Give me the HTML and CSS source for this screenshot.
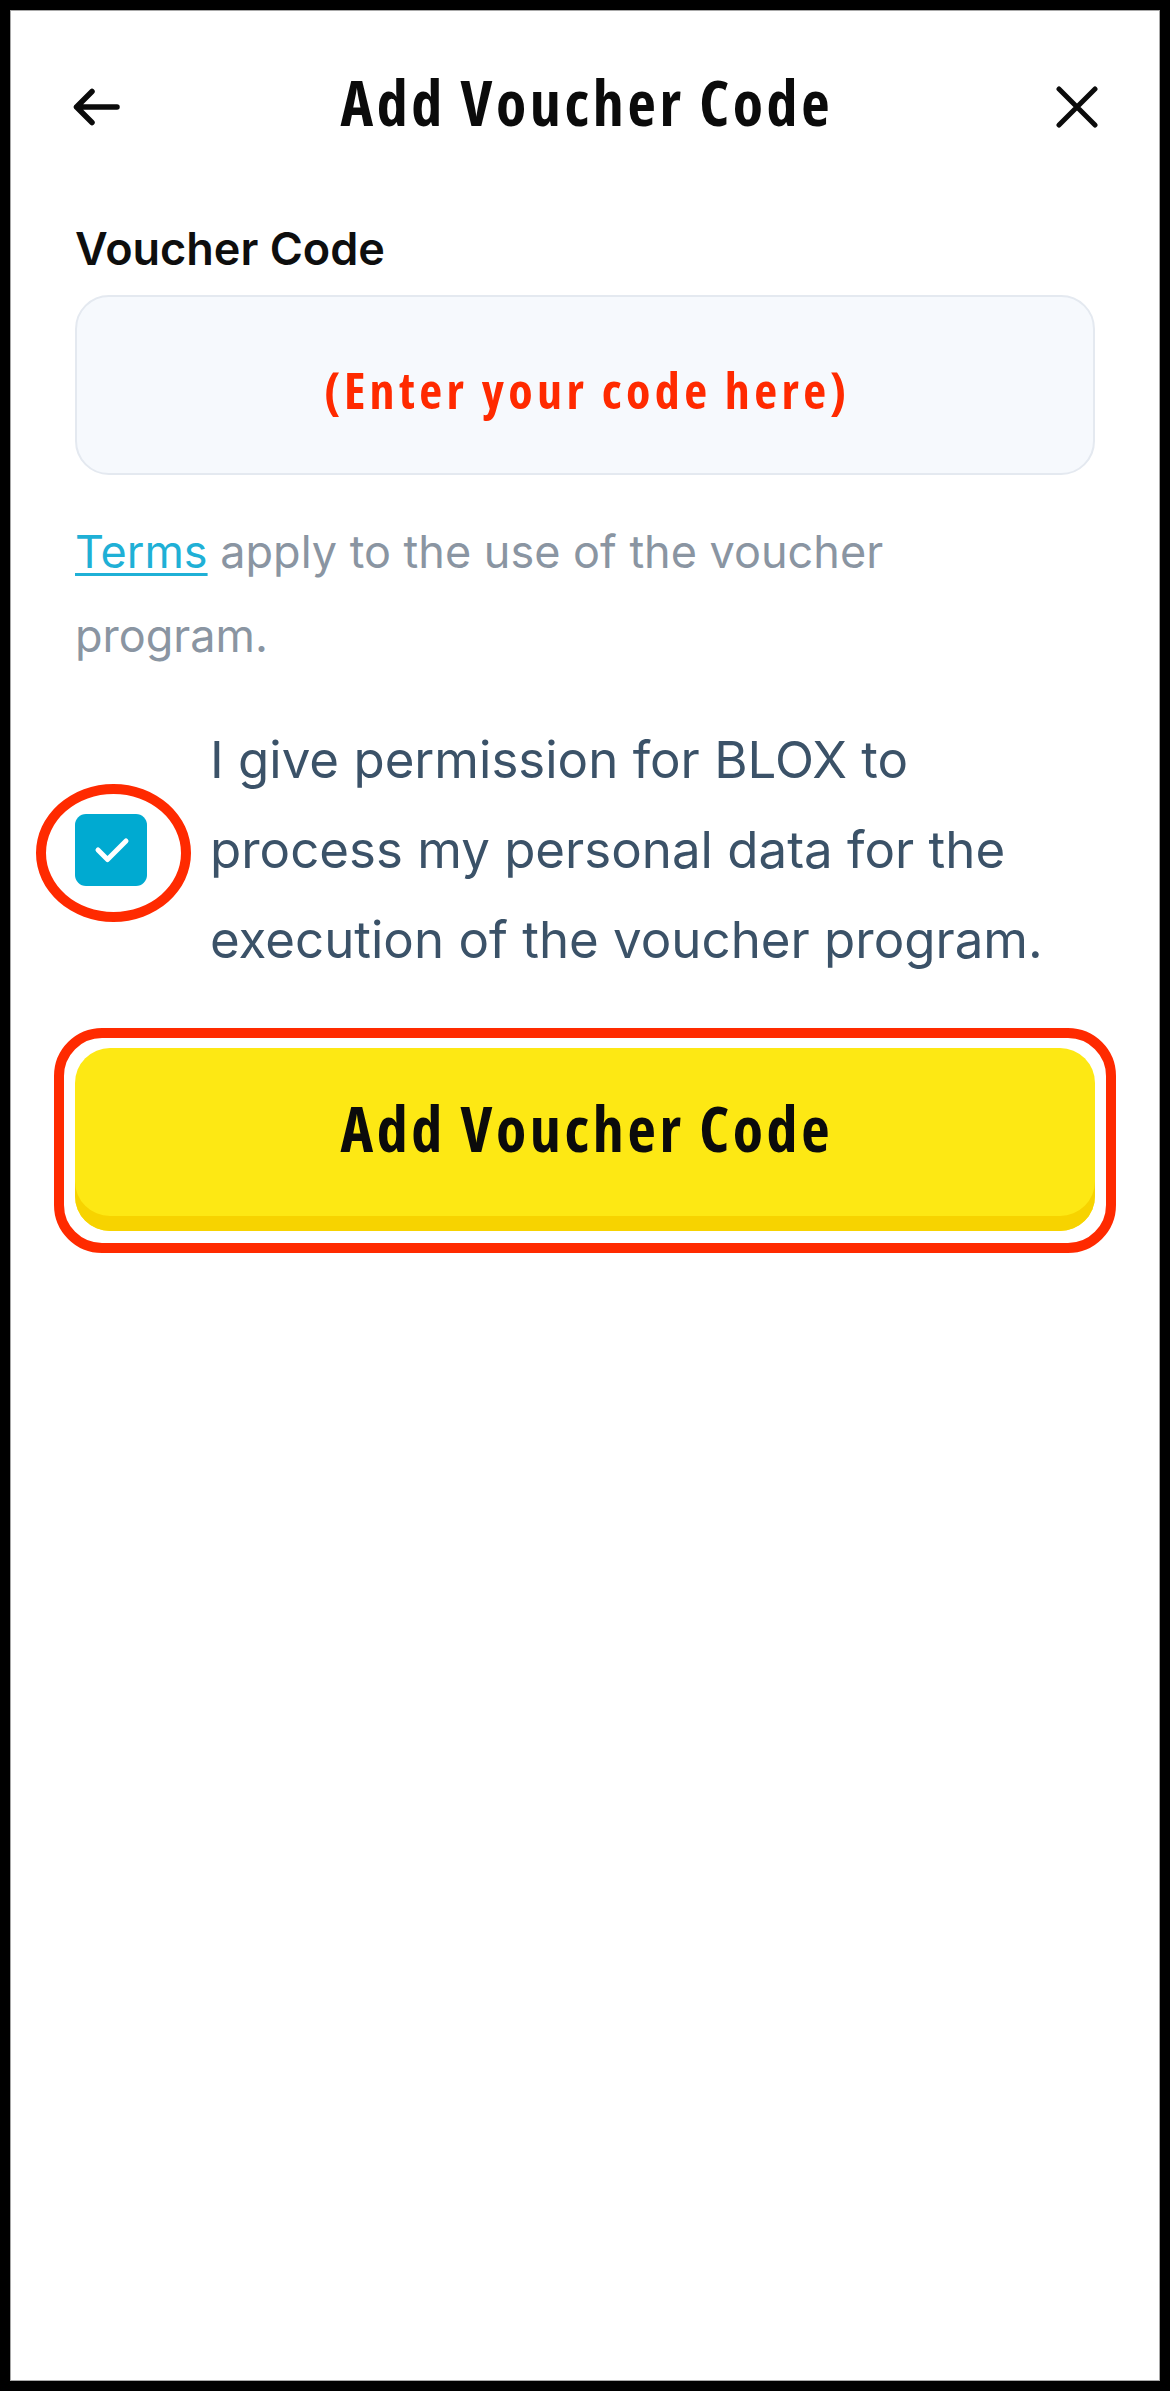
FILE: index.html
```html
<!DOCTYPE html>
<html lang="en">
<head>
<meta charset="utf-8">
<title>Add Voucher Code</title>
<link rel="stylesheet" href="styles.css">
</head>
<body>
<div class="screen">
  <header class="topbar">
    <button class="icon-btn back" aria-label="Back">
      <svg width="48" height="40" viewBox="0 0 48 40" fill="none" stroke="#0b0b0b" stroke-width="5.5" stroke-linecap="round" stroke-linejoin="round"><path d="M45 20H4.5M20 4.5L4.5 20L20 35.5"/></svg>
    </button>
    <h1 class="title">Add Voucher Code</h1>
    <button class="icon-btn close" aria-label="Close">
      <svg width="42" height="42" viewBox="0 0 42 42" fill="none" stroke="#0b0b0b" stroke-width="5" stroke-linecap="round"><path d="M3 3L39 39M39 3L3 39"/></svg>
    </button>
  </header>

  <main class="content">
    <label class="field-label">Voucher Code</label>
    <div class="code-input"><span class="placeholder">(Enter your code here)</span></div>

    <p class="terms"><a class="terms-link">Terms</a> apply to the use of the voucher program.</p>

    <div class="consent">
      <div class="check-wrap">
        <span class="checkbox">
          <svg width="72" height="72" viewBox="0 0 72 72" fill="none" stroke="#fff" stroke-width="5" stroke-linecap="round" stroke-linejoin="round"><path d="M23 36L32.5 45.5L51 27"/></svg>
        </span>
        <span class="ring"></span>
      </div>
      <p class="consent-text">I give permission for BLOX to process my personal data for the execution of the voucher program.</p>
    </div>

    <button class="primary"><span class="primary-label">Add Voucher Code</span></button>
  </main>
</div>
</body>
</html>
```
FILE: styles.css
```css
html, body {
  margin: 0;
  padding: 0;
  background: #000;
}
.screen {
  margin: 10px;
  height: 2371px;
  box-sizing: border-box;
  background: #fff;
  box-shadow: inset 0 0 0 1px #a8a8a8;
  padding: 49px 0 0;
  font-family: Inter, "Noto Sans", sans-serif;
}
.topbar {
  display: grid;
  grid-template-columns: 1fr auto 1fr;
  align-items: center;
  height: 96px;
  padding: 0 62px;
}
.icon-btn {
  border: 0;
  background: none;
  padding: 0;
  display: flex;
  cursor: pointer;
}
.back { justify-self: start; }
.close { justify-self: end; }
.title {
  margin: 0;
  padding: 0 0 10px 3.6px;
  font-family: "Open Sans", sans-serif;
  font-stretch: 75%;
  font-weight: 700;
  font-size: 62px;
  letter-spacing: 3.6px;
  line-height: 1;
  color: #0b0b0b;
  white-space: nowrap;
}
.content {
  padding: 67px 65px 0;
  display: flex;
  flex-direction: column;
}
.field-label {
  font-weight: 600;
  font-size: 45px;
  line-height: 54px;
  color: #0e0e0e;
}
.code-input {
  margin-top: 19px;
  height: 180px;
  box-sizing: border-box;
  border: 2px solid #e4e9f0;
  border-radius: 34px;
  background: #f6f9fd;
  display: flex;
  align-items: center;
  justify-content: center;
  padding-top: 9px;
}
.placeholder {
  padding-left: 4.4px;
  font-family: "Open Sans", sans-serif;
  font-stretch: 75%;
  font-weight: 700;
  font-size: 50px;
  letter-spacing: 4.4px;
  line-height: 1;
  color: #ff2a00;
  white-space: nowrap;
}
.terms {
  margin: 35px 0 0;
  max-width: 960px;
  font-size: 45px;
  line-height: 84px;
  color: #8a95a2;
}
.terms-link {
  color: #1fb0d6;
  text-decoration: underline;
  text-decoration-thickness: 3px;
  text-underline-offset: 5px;
}
.consent {
  margin-top: 37px;
  display: flex;
  align-items: center;
  gap: 63px;
}
.check-wrap {
  position: relative;
  flex: none;
  width: 72px;
  height: 72px;
}
.checkbox {
  display: flex;
  width: 72px;
  height: 72px;
  border-radius: 11px;
  background: #00aad1;
}
.ring {
  position: absolute;
  left: -39px;
  top: -30px;
  width: 155px;
  height: 138px;
  box-sizing: border-box;
  border: 10px solid #ff2a00;
  border-radius: 50%;
}
.consent-text {
  margin: 0;
  max-width: 860px;
  font-size: 51px;
  line-height: 90px;
  color: #3b5268;
}
.primary {
  position: relative;
  margin-top: 63px;
  height: 183px;
  border: 0;
  border-radius: 35px;
  background: #fde814;
  box-shadow: inset 0 -15px 0 #f7d300;
  padding: 0 0 23px;
  display: flex;
  align-items: center;
  justify-content: center;
  cursor: pointer;
}
.primary-label {
  padding-left: 3.6px;
  font-family: "Open Sans", sans-serif;
  font-stretch: 75%;
  font-weight: 700;
  font-size: 62px;
  letter-spacing: 3.6px;
  line-height: 1;
  color: #0b0b0b;
  white-space: nowrap;
}
.primary::after {
  content: "";
  position: absolute;
  inset: -20px -21px -22px -21px;
  border: 10px solid #ff2a00;
  border-radius: 48px;
  pointer-events: none;
}
```
